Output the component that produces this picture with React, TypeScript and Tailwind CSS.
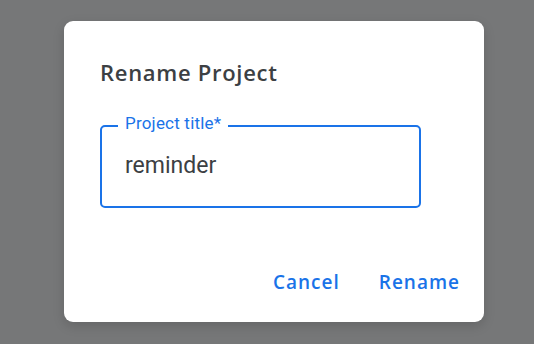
export default function App() {
  return (
    <div className="h-[344px] w-[534px] bg-[#767778] pl-[64px] pt-[21px]" style={{ fontFamily: "Roboto, 'Liberation Sans', sans-serif" }}>
      <div className="flex h-[301px] w-[420px] flex-col rounded-[9px] bg-white pl-[36px] pr-[24px] shadow-[0_4px_12px_rgba(0,0,0,0.15)]">
        <h2 className="mt-[36px] font-['Open_Sans',sans-serif] text-[22px] font-semibold leading-[30px] tracking-[0.7px] text-[#3c4043]">Rename Project</h2>
        <div className="relative mt-[38px] flex h-[83px] w-[321px] items-center rounded-[5px] border-2 border-[#1a73e8] px-[23px]">
          <span className="absolute left-[16px] top-[-14px] bg-white px-[7px] text-[17px] leading-[20px] tracking-[0.2px] text-[#1a73e8]">Project title*</span>
          <span className="text-[23px] text-[#3c4043]">reminder</span>
        </div>
        <div className="mt-auto mb-[26px] flex justify-end gap-[39px] font-['Open_Sans',sans-serif]">
          <button className="text-[19px] font-semibold tracking-[1px] text-[#1a73e8]">Cancel</button>
          <button className="text-[19px] font-semibold tracking-[1px] text-[#1a73e8]">Rename</button>
        </div>
      </div>
    </div>
  )
}
